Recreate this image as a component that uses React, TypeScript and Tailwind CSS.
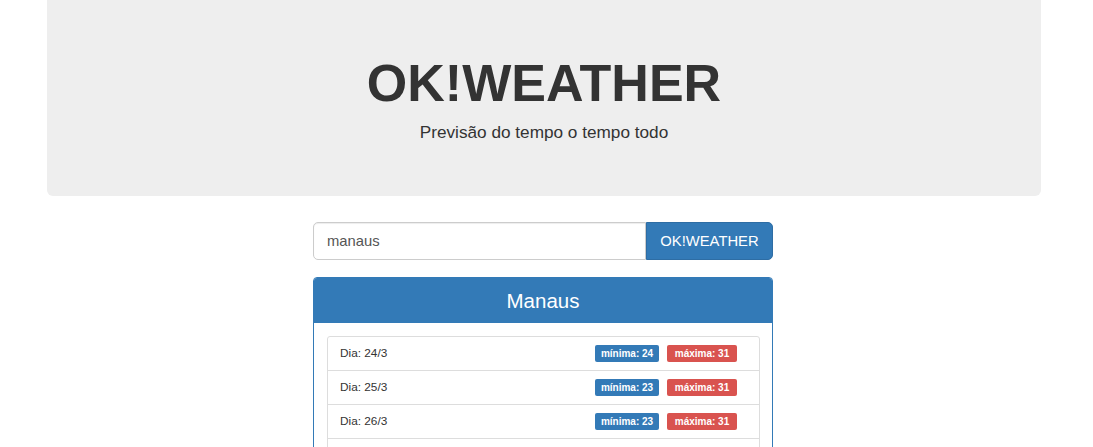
const forecast = [
  { day: "24/3", min: 24, max: 31 },
  { day: "25/3", min: 23, max: 31 },
  { day: "26/3", min: 23, max: 31 },
  { day: "27/3", min: 24, max: 32 },
];

export default function App() {
  return (
    <div className="min-h-screen w-full bg-white font-['Liberation_Sans',Arial,sans-serif] text-[#333]">
      {/* Jumbotron */}
      <div className="w-[1088px]">
        <div className="mx-auto w-[994px] rounded-b-[6px] bg-[#eeeeee] pt-[55px] pb-[51px] text-center">
          <h1 className="text-[52px] font-bold leading-[57px] text-[#333]">OK!WEATHER</h1>
          <p className="mt-[8px] text-[17.2px] leading-[25px] text-[#333]">Previsão do tempo o tempo todo</p>
        </div>
      </div>

      <div className="w-[1086px]">
        <div className="mx-auto mt-[26px] w-[460px]">
          {/* Search */}
          <form className="flex h-[38px]" onSubmit={(e) => e.preventDefault()}>
            <input
              defaultValue="manaus"
              className="h-full min-w-0 flex-1 rounded-l-[5px] border border-[#ccc] bg-white px-[13px] text-[14.8px] text-[#555] shadow-[inset_0_1px_1px_rgba(0,0,0,0.075)] outline-none"
            />
            <button
              type="submit"
              className="h-full w-[127px] rounded-r-[5px] border border-[#2e6da4] bg-[#337ab7] text-[14.8px] text-white"
            >
              OK!WEATHER
            </button>
          </form>

          {/* Panel */}
          <div className="mt-[17px] overflow-hidden rounded-[4px] border border-[#337ab7]">
            <div className="bg-[#337ab7] pt-[12px] pb-[11px] text-center text-[20.5px] leading-[22px] text-white">
              Manaus
            </div>
            <div className="py-[13px] pl-[13px] pr-[12px]">
              <ul className="divide-y divide-[#ddd] rounded-[3px] border border-[#ddd] text-[11.8px] leading-[17px]">
                {forecast.map((f) => (
                  <li key={f.day} className="flex items-center justify-between py-[8px] pl-[12px] pr-[22px]">
                    <span>Dia: {f.day}</span>
                    <span className="flex gap-[8px]">
                      <span className="w-[64px] rounded-[2px] bg-[#337ab7] py-[3px] text-center text-[10px] font-bold leading-[11px] text-white">
                        mínima: {f.min}
                      </span>
                      <span className="w-[70px] rounded-[2px] bg-[#d9534f] py-[3px] text-center text-[10px] font-bold leading-[11px] text-white">
                        máxima: {f.max}
                      </span>
                    </span>
                  </li>
                ))}
              </ul>
            </div>
          </div>
        </div>
      </div>
    </div>
  );
}
